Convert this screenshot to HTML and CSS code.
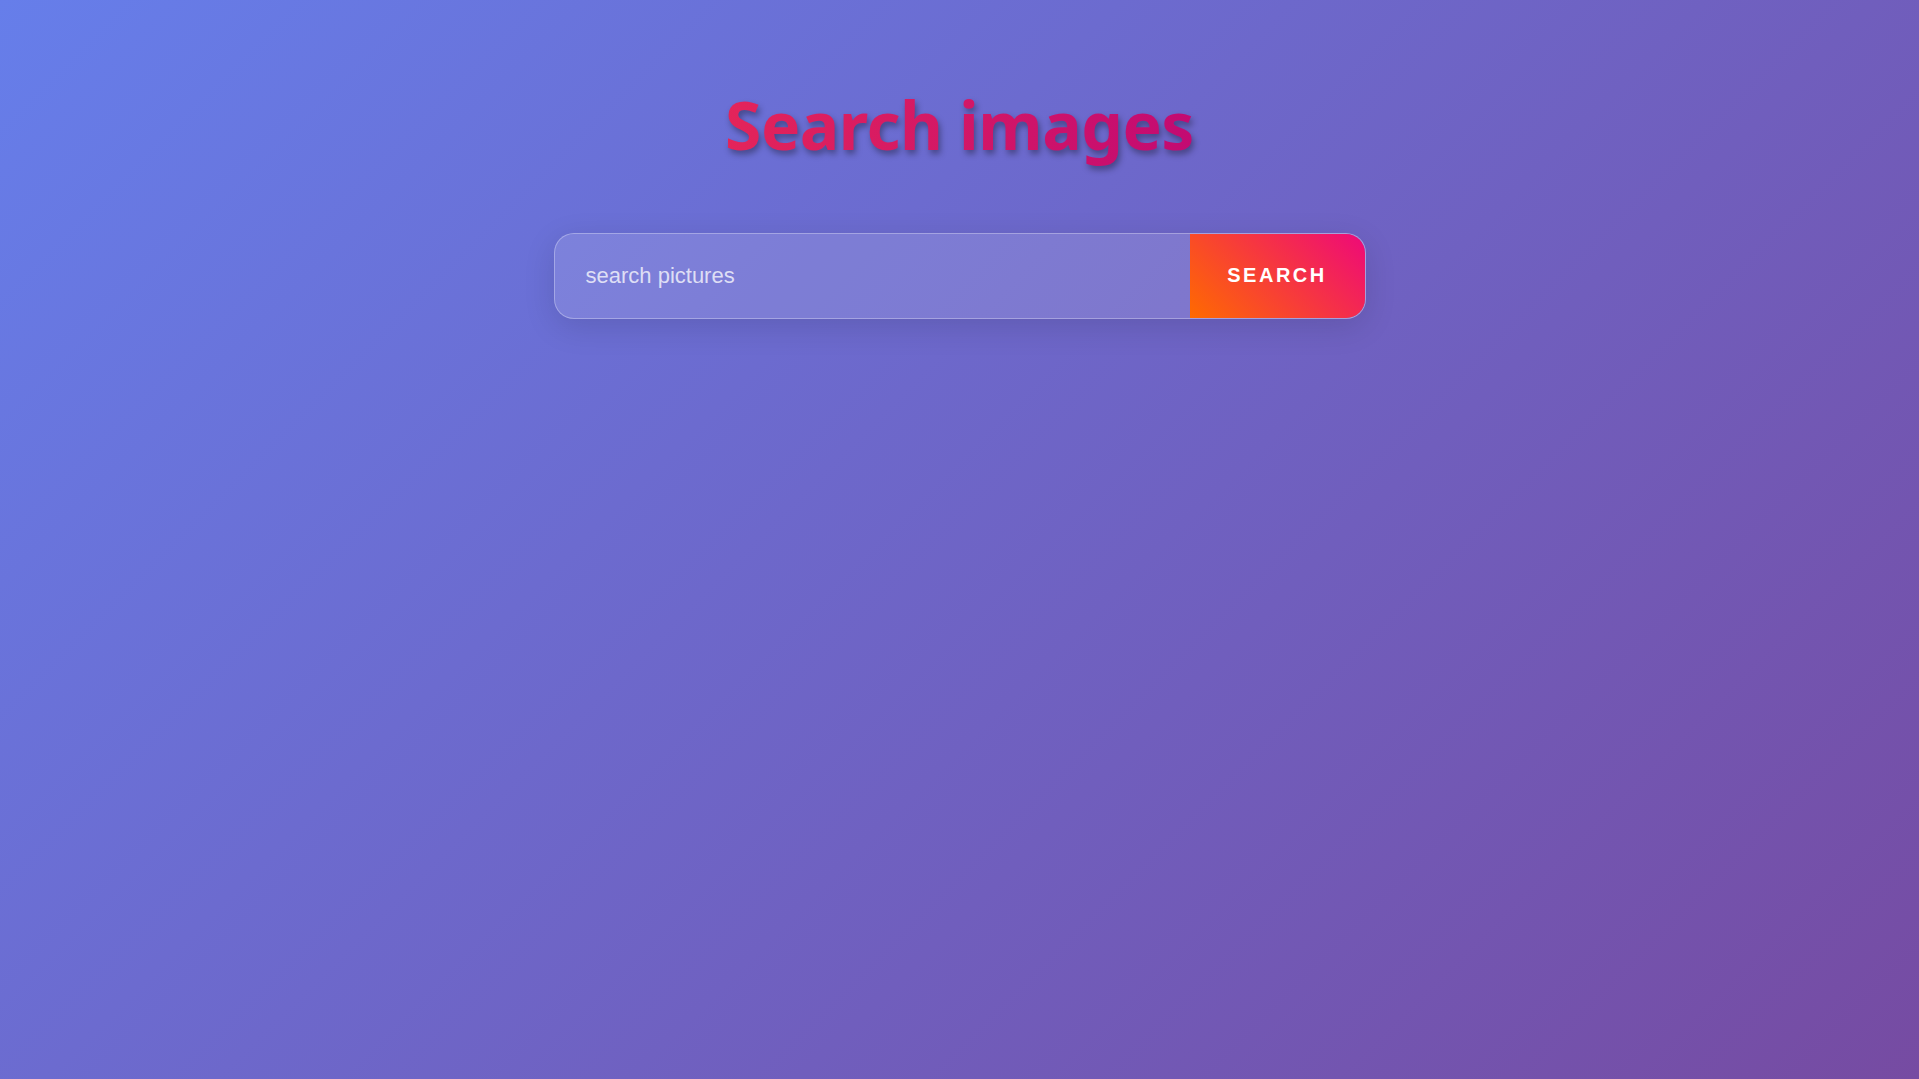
FILE: index.html
```html
<!DOCTYPE html>
<html lang="en">
<head>
<meta charset="utf-8">
<title>Search images</title>
<link rel="stylesheet" href="styles.css">
</head>
<body>
<main class="page">
  <h1 class="title">Search images</h1>
  <form class="search" onsubmit="return false">
    <input class="search-input" type="text" placeholder="search pictures">
    <button class="search-btn" type="submit">SEARCH</button>
  </form>
</main>
</body>
</html>
```

FILE: styles.css
```css
html, body {
  margin: 0;
  padding: 0;
  height: 100%;
}
body {
  background: linear-gradient(135deg, #667eea 0%, #764ba2 100%);
  font-family: "Liberation Sans", Arial, sans-serif;
}
.page {
  display: flex;
  flex-direction: column;
  align-items: center;
  padding-top: 82px;
}
.title {
  margin: 0;
  font-family: "Noto Sans", "Open Sans", sans-serif;
  font-weight: 700;
  font-size: 66px;
  line-height: 1.3;
  letter-spacing: -0.5px;
  background: linear-gradient(90deg, #e3245a 0%, #c30a72 100%);
  -webkit-background-clip: text;
  background-clip: text;
  color: transparent;
  filter: drop-shadow(2px 4px 3px rgba(0, 0, 0, 0.35));
}
.search {
  display: flex;
  width: 812px;
  height: 86px;
  margin-top: 65px;
  border: 1px solid rgba(255, 255, 255, 0.3);
  border-radius: 20px;
  overflow: hidden;
  box-sizing: border-box;
  background: rgba(255, 255, 255, 0.12);
  box-shadow: 0 8px 32px rgba(0, 0, 0, 0.12);
}
.search-input {
  flex: 1;
  border: 0;
  outline: none;
  background: transparent;
  padding: 0 31px;
  font-family: "Liberation Sans", Arial, sans-serif;
  font-size: 22px;
  color: #fff;
}
.search-input::placeholder {
  color: rgba(255, 255, 255, 0.75);
}
.search-btn {
  width: 175px;
  border: 0;
  background: linear-gradient(45deg, #ff6a00 0%, #ee0979 100%);
  color: #fff;
  font-family: "Liberation Sans", Arial, sans-serif;
  font-weight: 700;
  font-size: 20px;
  letter-spacing: 2.5px;
  cursor: pointer;
}
```
